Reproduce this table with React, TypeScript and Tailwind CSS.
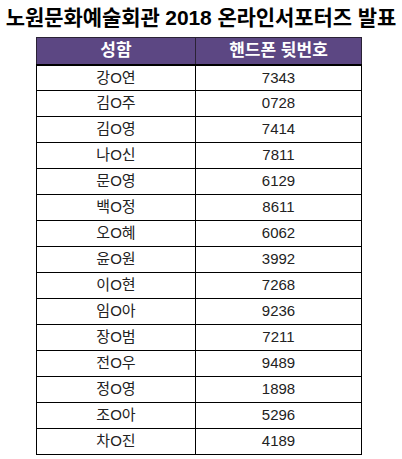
import React from 'react';

const rows: [string, string][] = [
  ['강O연', '7343'],
  ['김O주', '0728'],
  ['김O영', '7414'],
  ['나O신', '7811'],
  ['문O영', '6129'],
  ['백O정', '8611'],
  ['오O혜', '6062'],
  ['윤O원', '3992'],
  ['이O현', '7268'],
  ['임O아', '9236'],
  ['장O범', '7211'],
  ['전O우', '9489'],
  ['정O영', '1898'],
  ['조O아', '5296'],
  ['차O진', '4189'],
];

const font = { fontFamily: '"Liberation Sans", "Noto Sans CJK KR", sans-serif' };

export default function App() {
  return (
    <div className="w-[402px] h-[459px] bg-white overflow-hidden" style={font}>
      <div className="flex justify-center pt-[7px]">
        <h1 className="text-[21px] font-bold leading-none tracking-[-0.1px] text-black whitespace-nowrap">
          노원문화예술회관 2018 온라인서포터즈 발표
        </h1>
      </div>
      <table className="mt-[9px] ml-[36px] w-[326px] border-collapse table-fixed">
        <thead>
          <tr className="h-[26px] bg-[#5c4783] text-white">
            <th className="w-[159px] border border-[#2a2235] border-b-2 border-b-black text-[17px] font-bold p-0">성함</th>
            <th className="border border-[#2a2235] border-b-2 border-b-black text-[17px] font-bold p-0">핸드폰 뒷번호</th>
          </tr>
        </thead>
        <tbody>
          {rows.map(([name, num]) => (
            <tr key={name + num} className="h-[26px]">
              <td className="border border-black text-center text-[15px] text-[#222] p-0">{name}</td>
              <td className="border border-black text-center text-[15px] text-[#222] p-0">{num}</td>
            </tr>
          ))}
        </tbody>
      </table>
    </div>
  );
}
